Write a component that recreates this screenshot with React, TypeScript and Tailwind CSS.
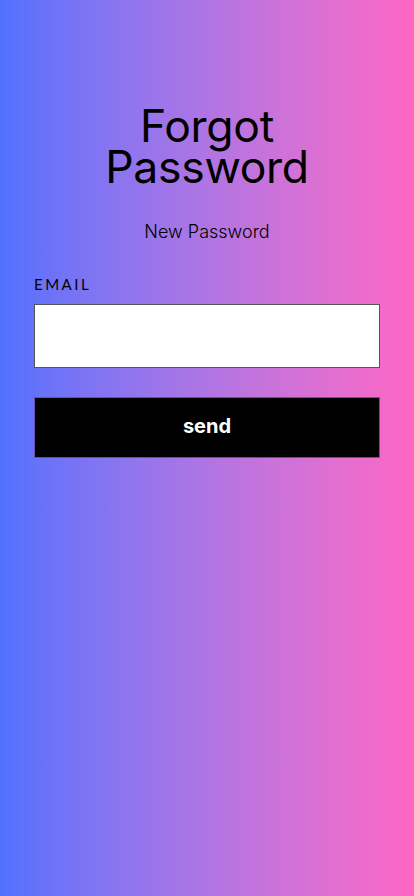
export default function App() {
  return (
    <div className="min-h-[896px] w-full bg-gradient-to-r from-[#5170ff] to-[#ff66c4]">
      <div className="px-[34px] pt-[106px]">
        <h1 className="text-center text-[44.5px] leading-[41px] text-black font-['Inter',sans-serif] font-normal tracking-[-0.3px]">
          Forgot
          <br />
          Password
        </h1>
        <p className="mt-[31px] text-center text-[18px] leading-[26px] text-black font-['Inter',sans-serif] font-light">
          New Password
        </p>

        <form className="mt-[29px]" onSubmit={(e) => e.preventDefault()}>
          <label className="block text-[15px] leading-[20px] tracking-[2.5px] text-black font-['Lato',sans-serif]">
            EMAIL
          </label>
          <input
            type="email"
            className="mt-[10px] block h-[64px] w-full border border-[#555] bg-white px-3 outline-none"
          />
          <button
            type="submit"
            className="mt-[29px] block h-[61px] w-full bg-black pb-[3px] text-[20px] font-bold text-white font-['Inter',sans-serif] border border-[#6a4bb0]"
          >
            send
          </button>
        </form>
      </div>
    </div>
  );
}
